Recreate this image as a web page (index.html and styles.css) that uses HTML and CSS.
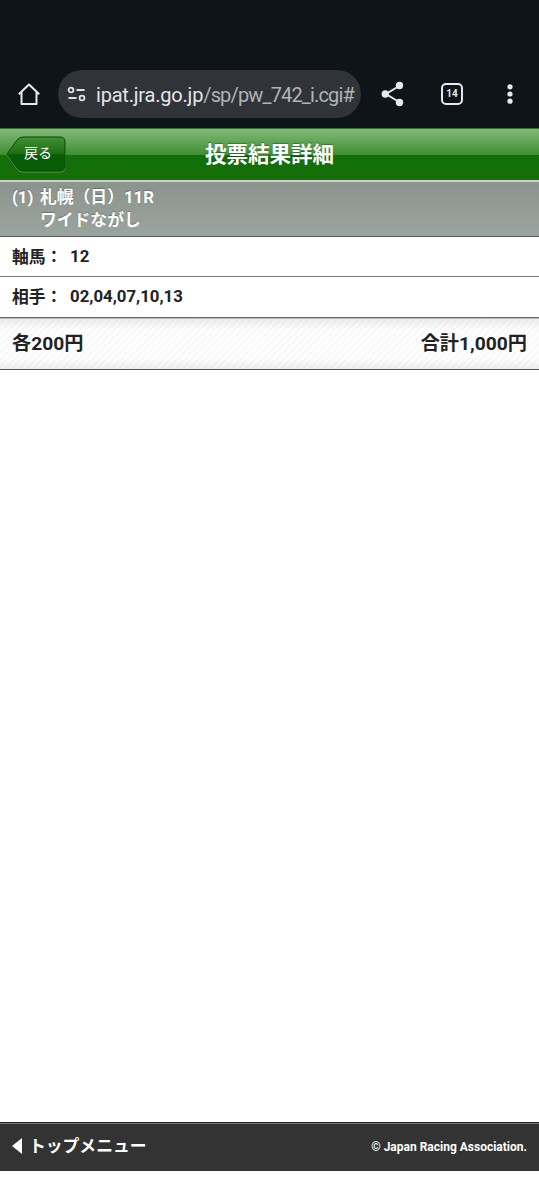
FILE: index.html
```html
<!DOCTYPE html>
<html lang="ja">
<head>
    <meta charset="UTF-8">
    <meta name="viewport" content="width=device-width, initial-scale=1">
    <title>投票結果詳細</title>
    <link rel="stylesheet" href="styles.css">
</head>
<body>
    <div class="browser-bar">
        <svg class="icon-home" width="24" height="24" viewBox="0 0 24 24" fill="none" stroke="#e4e8f0" stroke-width="2" stroke-linejoin="round">
            <path d="M1.800 12.200L12 2.500l10.200 9.700M4.500 10v12h15V10"/>
        </svg>
        <div class="url-box">
            <svg class="icon-tune" width="20" height="16" viewBox="0 0 20 16" fill="none" stroke="#dfe2e8" stroke-width="1.8">
                <circle cx="4" cy="4" r="2.4"/>
                <path d="M9.500 4h8M1.500 12h8"/>
                <circle cx="15" cy="12" r="2.4"/>
            </svg>
            <div class="url"><span class="url-host">ipat.jra.go.jp</span>/sp/pw_742_i.cgi#</div>
        </div>
        <svg class="icon-share" width="24" height="26" viewBox="0 0 24 26" fill="#e4e8f0">
            <path d="M19 4.500L5 13l14 8.500" fill="none" stroke="#e4e8f0" stroke-width="2"/>
            <circle cx="18.500" cy="4.500" r="3.700"/>
            <circle cx="4.300" cy="13" r="3.700"/>
            <circle cx="18.500" cy="21.500" r="3.700"/>
        </svg>
        <div class="tab-count">14</div>
        <svg class="icon-menu" width="6" height="22" viewBox="0 0 6 22" fill="#e4e8f0">
            <circle cx="3" cy="3.8" r="2.6"/>
            <circle cx="3" cy="11" r="2.6"/>
            <circle cx="3" cy="18.2" r="2.6"/>
        </svg>
    </div>

    <header class="title-bar">
        <a class="back-button">
            <svg class="back-shape" width="61" height="38" viewBox="0 0 61 38">
                <defs>
                    <linearGradient id="back-fill" x1="0" y1="0" x2="0" y2="1">
                        <stop offset="0" stop-color="#429034"/>
                        <stop offset="0.5" stop-color="#1f6d14"/>
                        <stop offset="0.52" stop-color="#075b04"/>
                        <stop offset="1" stop-color="#095d04"/>
                    </linearGradient>
                </defs>
                <path d="M1 18L11 4Q13.500 1 17 1h37q5 0 5 5v24q0 5-5 5H17q-3.500 0-6-3z" fill="none" stroke="#7fb474" stroke-opacity="0.7" transform="translate(0 1)"/>
                <path d="M1 18L11 4Q13.500 1 17 1h37q5 0 5 5v24q0 5-5 5H17q-3.500 0-6-3z" fill="url(#back-fill)" stroke="#0b4907"/>
            </svg>
            <span class="back-label">戻る</span>
        </a>
        <h1>投票結果詳細</h1>
    </header>

    <div class="race-info">
        <span class="race-number">(1)</span>
        <div>
            <div>札幌（日）11R</div>
            <div>ワイドながし</div>
        </div>
    </div>

    <div class="bet-row axis-row">
        <span class="bet-label">軸馬：</span>
        <span>12</span>
    </div>
    <div class="bet-row">
        <span class="bet-label">相手：</span>
        <span>02,04,07,10,13</span>
    </div>
    <div class="total-row">
        <span>各200円</span>
        <span>合計1,000円</span>
    </div>

    <footer class="footer">
        <a class="top-menu"><span class="arrow"></span>トップメニュー</a>
        <small>© Japan Racing Association.</small>
    </footer>
</body>
</html>
```

FILE: styles.css
```css
* {
    box-sizing: border-box;
}

body {
    font-family: Roboto, 'Noto Sans CJK JP', sans-serif;
    display: flex;
    flex-direction: column;
    height: 1200px;
    margin: 0;
    padding-bottom: 29px;
    background: #fff;
    color: #222;
    overflow: hidden;
}

/* browser toolbar */
.browser-bar {
    display: flex;
    align-items: center;
    flex: none;
    height: 128px;
    padding: 60px 26px 0 17px;
    background: #0f1418;
}

.url-box {
    display: flex;
    align-items: center;
    width: 303px;
    height: 48px;
    margin-left: 17px;
    padding: 0 10px 0 9px;
    border-radius: 24px;
    background: #303338;
}

.icon-tune {
    flex: none;
    margin-right: 9px;
}

.url {
    flex: none;
    width: 256px;
    padding-top: 1px;
    white-space: nowrap;
    font-size: 20px;
    line-height: 28px;
    letter-spacing: -0.85px;
    color: #b0b3b9;
}

.url-host {
    letter-spacing: -0.2px;
    color: #e3e5ea;
}

.icon-share {
    margin-left: 20px;
}

.tab-count {
    width: 22px;
    height: 22px;
    margin-left: 36px;
    border: 2px solid #e4e8f0;
    border-radius: 5px;
    font-size: 10px;
    font-weight: 700;
    line-height: 18px;
    text-align: center;
    color: #e4e8f0;
}

.icon-menu {
    margin-left: auto;
}

/* page header */
.title-bar {
    display: grid;
    grid-template-columns: 90px 1fr 90px;
    align-items: center;
    flex: none;
    height: 54px;
    border-top: 1px solid #356d2e;
    border-bottom: 2px solid #c7d1c5;
    background: linear-gradient(#83b978 0, #3f8f32 50%, #10700a 51%, #176d07 100%);
}

.title-bar h1 {
    margin: 0;
    font-size: 21.5px;
    line-height: 30px;
    font-weight: 700;
    text-align: center;
    color: #fff;
    text-shadow: 0 -1px 1px rgba(0, 0, 0, 0.3);
}

.back-button {
    display: grid;
    width: 61px;
    margin-left: 6px;
    color: #fff;
}

.back-shape,
.back-label {
    grid-area: 1 / 1;
}

.back-label {
    z-index: 1;
    padding-left: 18px;
    font-size: 14px;
    line-height: 35px;
}

.race-info {
    display: flex;
    flex: none;
    height: 55px;
    padding: 4px 12px 0;
    border-bottom: 1px solid #555;
    background: linear-gradient(#8a938c, #9ba59f);
    font-size: 16.8px;
    font-weight: 700;
    line-height: 23px;
    color: #fff;
    text-shadow: 0 -1px 1px rgba(0, 0, 0, 0.25);
}

.race-number {
    width: 28px;
}

/* bet details */
.bet-row {
    display: flex;
    align-items: center;
    flex: none;
    height: 41px;
    padding: 0 12px 2px;
    border-bottom: 1px solid #666;
    font-size: 16.8px;
    font-weight: 700;
}

.axis-row {
    height: 40px;
    border-bottom-color: #777;
}

.bet-label {
    width: 58px;
}

.total-row {
    display: flex;
    justify-content: space-between;
    align-items: center;
    flex: none;
    height: 52px;
    padding: 0 12px 4px;
    border-top: 1px solid #bbb;
    border-bottom: 1px solid #555;
    background:
        linear-gradient(rgba(0, 0, 0, 0.07), transparent 22%, transparent 78%, rgba(0, 0, 0, 0.06)),
        repeating-linear-gradient(135deg, #fff 0, #fff 2px, #f9f9f9 3px, #f9f9f9 5px);
    font-size: 19.2px;
    font-weight: 700;
}

/* footer */
.footer {
    display: flex;
    justify-content: space-between;
    align-items: center;
    height: 49px;
    margin-top: auto;
    padding: 0 12px 1px;
    border-top: 1px solid #222;
    background: #333;
    box-shadow: inset 0 1px #777;
    color: #fff;
}

.top-menu {
    display: flex;
    align-items: center;
    padding-bottom: 3px;
    font-size: 16.8px;
    font-weight: 700;
}

.arrow {
    margin: 2px 7px 0 0;
    border: 8px solid transparent;
    border-right: 10px solid #fff;
    border-left: 0;
}

.footer small {
    font-size: 12px;
    font-weight: 700;
}
```
